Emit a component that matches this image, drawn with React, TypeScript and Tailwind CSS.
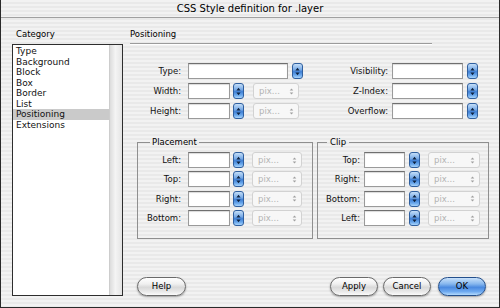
import React from "react";

const Stepper = () => (
  <div className="w-[11px] h-[16px] shrink-0 rounded-[3px] border border-[#2f5f9f] bg-[linear-gradient(to_bottom,#c4def8_0%,#78aae6_40%,#3f7fd4_55%,#6aa8ec_80%,#a9d4fb_100%)] flex items-center justify-center">
    <svg width="5" height="9" viewBox="0 0 5 9">
      <path d="M2.5 0.8 L4.6 3.4 L0.4 3.4Z M2.5 8.2 L4.6 5.6 L0.4 5.6Z" fill="#0f2340" />
    </svg>
  </div>
);

const Pix = ({ w }: { w: string }) => (
  <div className={`${w} h-[16px] shrink-0 rounded-[3px] border border-[#d2d2d2] bg-[#f7f7f7] flex items-center pl-[5px] pr-[4px] text-[#b3b3b3] text-[8.5px] leading-none`}>
    <span className="flex-1">pix...</span>
    <svg width="5" height="9" viewBox="0 0 5 9">
      <path d="M2.5 1.5 L4.3 3.6 L0.7 3.6Z M2.5 7.5 L4.3 5.4 L0.7 5.4Z" fill="#a0a0a0" />
    </svg>
  </div>
);

const Input = ({ w }: { w: string }) => (
  <div className={`${w} h-[16px] shrink-0 bg-white border border-[#9a9a9a] border-t-[#6f6f6f] shadow-[inset_0_1px_1px_rgba(0,0,0,0.15)]`} />
);

const Label = ({ w, children }: { w: string; children: React.ReactNode }) => (
  <div className={`${w} shrink-0 text-right text-[8.5px] leading-[16px] text-[#111]`}>{children}</div>
);

const Btn = ({ w, children, primary }: { w: string; children: React.ReactNode; primary?: boolean }) => (
  <div
    className={`${w} h-[19px] shrink-0 rounded-full flex items-center justify-center text-[8.5px] text-black ${
      primary
        ? "border border-[#234f8c] bg-[linear-gradient(to_bottom,#c9e1fa_0%,#86b7ee_35%,#4b8ae0_55%,#6eaaf0_80%,#b3dafd_100%)]"
        : "border border-[#6a6a6a] bg-[linear-gradient(to_bottom,#ffffff_0%,#f0f0f0_35%,#d9d9d9_55%,#e9e9e9_80%,#fbfbfb_100%)]"
    } shadow-[0_1px_2px_rgba(0,0,0,0.35)]`}
  >
    {children}
  </div>
);

export default function App() {
  const items = ["Type", "Background", "Block", "Box", "Border", "List", "Positioning", "Extensions"];
  return (
    <div
      className="w-[500px] h-[308px] flex flex-col border-x border-b border-[#2a2a2a] bg-[repeating-linear-gradient(to_bottom,#f2f2f2_0px,#f2f2f2_2px,#e9e9e9_2px,#e9e9e9_4px)] text-black overflow-hidden"
      style={{ fontFamily: '"DejaVu Sans", "Liberation Sans", sans-serif' }}
    >
      {/* title bar */}
      <div className="h-[18px] shrink-0 flex items-center justify-center text-[10px] leading-none border-b border-[#a0a0a0]">
        CSS Style definition for .layer
      </div>

      <div className="flex flex-1">
        {/* left column */}
        <div className="ml-[11px] w-[111px] shrink-0 pt-[10px] flex flex-col">
          <div className="pl-[4px] text-[8.5px] leading-[12px] h-[12px]">Category</div>
          <div className="mt-[4px] h-[252px] border border-[#2e2e2e] bg-white flex">
            <div className="flex-1 pt-[1px] flex flex-col">
              {items.map((it) => (
                <div
                  key={it}
                  className={`pl-[3px] text-[9px] leading-[10.5px] h-[10.5px] text-[#111] ${it === "Positioning" ? "bg-[#cacaca]" : ""}`}
                >
                  {it}
                </div>
              ))}
            </div>
            <div className="w-[13px] border-l border-[#cdcdcd] bg-[linear-gradient(to_right,#dcdcdc,#f4f4f4_45%,#e4e4e4)]" />
          </div>
        </div>

        {/* right column */}
        <div className="ml-[7px] flex-1 pt-[10px] flex flex-col">
          <div className="text-[8.5px] leading-[12px] h-[12px]">Positioning</div>
          <div className="mt-[3px] w-[302px] h-[2px] border-t border-[#9c9c9c] border-b border-b-white" />

          {/* top fields */}
          <div className="mt-[18px] flex">
            <div className="flex flex-col gap-[4px]">
              <div className="flex items-center">
                <Label w="w-[51px]">Type:</Label>
                <div className="ml-[7px]"><Input w="w-[100px]" /></div>
                <div className="ml-[4px]"><Stepper /></div>
              </div>
              <div className="flex items-center">
                <Label w="w-[51px]">Width:</Label>
                <div className="ml-[7px]"><Input w="w-[42px]" /></div>
                <div className="ml-[3px]"><Stepper /></div>
                <div className="ml-[9px]"><Pix w="w-[46px]" /></div>
              </div>
              <div className="flex items-center">
                <Label w="w-[51px]">Height:</Label>
                <div className="ml-[7px]"><Input w="w-[42px]" /></div>
                <div className="ml-[3px]"><Stepper /></div>
                <div className="ml-[9px]"><Pix w="w-[46px]" /></div>
              </div>
            </div>
            <div className="ml-[25px] flex flex-col gap-[4px]">
              <div className="flex items-center">
                <Label w="w-[60px]">Visibility:</Label>
                <div className="ml-[4px]"><Input w="w-[71px]" /></div>
                <div className="ml-[4px]"><Stepper /></div>
              </div>
              <div className="flex items-center">
                <Label w="w-[60px]">Z-Index:</Label>
                <div className="ml-[4px]"><Input w="w-[71px]" /></div>
                <div className="ml-[4px]"><Stepper /></div>
              </div>
              <div className="flex items-center">
                <Label w="w-[60px]">Overflow:</Label>
                <div className="ml-[4px]"><Input w="w-[71px]" /></div>
                <div className="ml-[4px]"><Stepper /></div>
              </div>
            </div>
          </div>

          {/* groups */}
          <div className="mt-[17px] ml-[7px] flex gap-[4px]">
            <fieldset className="w-[176px] h-[103px] border border-[#8f8f8f] m-0 p-0">
              <legend className="ml-[12px] px-[2px] text-[8.5px] leading-[12px]">Placement</legend>
              <div className="pt-[4px] flex flex-col gap-[3.4px]">
                {["Left:", "Top:", "Right:", "Bottom:"].map((l) => (
                  <div key={l} className="flex items-center">
                    <Label w="w-[43px]">{l}</Label>
                    <div className="ml-[7px]"><Input w="w-[42px]" /></div>
                    <div className="ml-[3px]"><Stepper /></div>
                    <div className="ml-[8px]"><Pix w="w-[50px]" /></div>
                  </div>
                ))}
              </div>
            </fieldset>
            <fieldset className="w-[172px] h-[103px] border border-[#8f8f8f] m-0 p-0">
              <legend className="ml-[9px] px-[3px] text-[8.5px] leading-[12px]">Clip</legend>
              <div className="pt-[4px] flex flex-col gap-[3.4px]">
                {["Top:", "Right:", "Bottom:", "Left:"].map((l) => (
                  <div key={l} className="flex items-center">
                    <Label w="w-[42px]">{l}</Label>
                    <div className="ml-[4px]"><Input w="w-[41px]" /></div>
                    <div className="ml-[4px]"><Stepper /></div>
                    <div className="ml-[8px]"><Pix w="w-[52px]" /></div>
                  </div>
                ))}
              </div>
            </fieldset>
          </div>

          {/* buttons */}
          <div className="mt-[38px] ml-[7px] flex">
            <Btn w="w-[49px]">Help</Btn>
            <div className="flex-1" />
            <Btn w="w-[48px]">Apply</Btn>
            <div className="ml-[5px]"><Btn w="w-[48px]">Cancel</Btn></div>
            <div className="ml-[7px] mr-[13px]"><Btn w="w-[48px]" primary>OK</Btn></div>
          </div>
        </div>
      </div>
    </div>
  );
}
